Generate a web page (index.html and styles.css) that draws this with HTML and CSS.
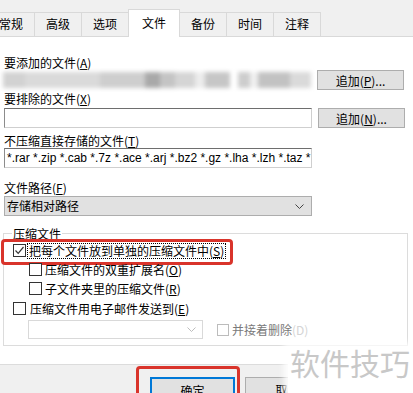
FILE: index.html
```html
<!DOCTYPE html>
<html lang="zh-CN">
<head>
  <meta charset="UTF-8" />
  <title>压缩文件名和参数 - 文件</title>
  <link rel="stylesheet" href="styles.css">
</head>
<body>

  <div class="dialog">
    <div class="tabs">
      <span class="tab tab-first">常规</span>
      <span class="tab">高级</span>
      <span class="tab">选项</span>
      <span class="tab active">文件</span>
      <span class="tab">备份</span>
      <span class="tab">时间</span>
      <span class="tab">注释</span>
    </div>

    <div class="page">
      <div class="label label-add">要添加的文件(<u>A</u>)</div>
      <div class="row">
        <div class="blur-field">
          <span class="seg" style="width:22px;background:#d2d2d2"></span>
          <span class="seg" style="width:75px;background:#dadada"></span>
          <span class="seg" style="width:45px;background:#cecece"></span>
          <span class="seg" style="width:15px;background:#a9a9a9"></span>
          <span class="seg" style="width:15px;background:#c4c4c4"></span>
          <span class="seg" style="width:20px;background:#d5d5d5"></span>
          <span class="seg" style="width:10px;background:#ececec"></span>
          <span class="seg" style="width:25px;background:#c6c6c6"></span>
          <span class="seg" style="width:8px;background:#ffffff"></span>
          <span class="seg" style="width:12px;background:#cdcdcd"></span>
          <span class="seg" style="width:8px;background:#f0f0f0"></span>
          <span class="seg" style="width:32px;background:#c2c2c2"></span>
          <span class="seg" style="width:21px;background:#dadada"></span>
        </div>
        <button class="btn">追加(<u>P</u>)...</button>
      </div>

      <div class="label label-exclude">要排除的文件(<u>X</u>)</div>
      <div class="row row-exclude">
        <div class="field"></div>
        <button class="btn">追加(<u>N</u>)...</button>
      </div>

      <div class="label label-store">不压缩直接存储的文件(<u>T</u>)</div>
      <div class="row">
        <div class="field field-text">*.rar *.zip *.cab *.7z *.ace *.arj *.bz2 *.gz *.lha *.lzh *.taz *</div>
      </div>

      <div class="label label-path">文件路径(<u>F</u>)</div>
      <div class="select">
        <span>存储相对路径</span>
        <svg class="chevron" width="9" height="5" viewBox="0 0 9 5"><path d="M0.5 0.5 L4.5 4.5 L8.5 0.5" fill="none" stroke="#444" stroke-width="1"/></svg>
      </div>

      <fieldset class="group">
        <legend>压缩文件</legend>

        <div class="check-row row-main">
          <span class="box checked">
            <svg width="11" height="11" viewBox="0 0 11 11"><path d="M1.5 5.5 L4.2 8.3 L9.5 2" fill="none" stroke="#333" stroke-width="1.2"/></svg>
          </span>
          <span class="focus-text">把每个文件放到单独的压缩文件中(<u>S</u>)</span>
          <span class="mark"></span>
        </div>

        <div class="check-row sub">
          <span class="box"></span>
          <span>压缩文件的双重扩展名(<u>O</u>)</span>
        </div>

        <div class="check-row sub">
          <span class="box"></span>
          <span>子文件夹里的压缩文件(<u>R</u>)</span>
        </div>

        <div class="check-row row-mail">
          <span class="box"></span>
          <span>压缩文件用电子邮件发送到(<u>E</u>)</span>
        </div>

        <div class="mail-row">
          <div class="combo">
            <svg class="chevron" width="9" height="5" viewBox="0 0 9 5"><path d="M0.5 0.5 L4.5 4.5 L8.5 0.5" fill="none" stroke="#bdbdbd" stroke-width="1"/></svg>
          </div>
          <div class="check-row disabled">
            <span class="box"></span>
            <span>并接着删除<span class="faded">(D)</span></span>
          </div>
        </div>
      </fieldset>
    </div>

    <div class="footer">
      <button class="btn btn-ok">确定</button>
      <button class="btn btn-cancel">取消</button>
      <span class="mark mark-ok"></span>
    </div>

    <div class="watermark">软件技巧</div>
  </div>

</body>
</html>
```

FILE: styles.css
```css
body {
  margin: 0;
  font-family: "Noto Sans CJK SC", "Liberation Sans", sans-serif;
  font-size: 12px;
  color: #000;
  background: #fff;
}

u {
  text-decoration: underline;
  text-underline-offset: 1px;
}

.dialog {
  width: 413px;
  height: 393px;
  background: #f0f0f0;
  display: flex;
  flex-direction: column;
  position: relative;
  overflow: hidden;
}

/* tab strip */

.tabs {
  display: flex;
  align-items: flex-end;
  height: 37px;
  box-sizing: border-box;
  border-bottom: 1px solid #d9d9d9;
  flex-shrink: 0;
}

.tab {
  height: 23px;
  line-height: 22px;
  padding: 0 11px;
  border-top: 1px solid #d9d9d9;
  border-right: 1px solid #d9d9d9;
  background: #f0f0f0;
  color: #000;
}

.tab-first {
  margin-left: -12px;
}

.tab.active {
  height: 27px;
  line-height: 25px;
  padding: 0 13px;
  margin-left: -1px;
  margin-bottom: -1px;
  border-left: 1px solid #d9d9d9;
  background: #fff;
  position: relative;
}

/* page */

.page {
  flex: 1;
  background: #fff;
  padding-left: 4px;
}

.label {
  line-height: 15px;
  height: 15px;
}

.label-add { margin-top: 18px; }
.label-exclude { margin-top: 1px; }
.label-store { margin-top: 5px; }
.label-path { margin-top: 12px; }

.row {
  display: flex;
  align-items: center;
  gap: 6px;
  height: 20px;
}

.row-exclude {
  margin-top: 2px;
}

.blur-field {
  width: 308px;
  height: 16px;
  display: flex;
  filter: blur(2px);
  margin-left: -1px;
  border-radius: 8px 0 0 8px;
}

.seg {
  display: block;
  height: 16px;
}

.field {
  width: 308px;
  height: 20px;
  box-sizing: border-box;
  border: 1px solid #cfcfcf;
  border-top-color: #6e6e6e;
  border-left-color: #8c8c8c;
  background: #fff;
}

.field-text {
  font-family: "Liberation Sans", sans-serif;
  font-size: 12px;
  line-height: 18px;
  padding-left: 2px;
  white-space: nowrap;
  overflow: hidden;
}

.btn {
  width: 87px;
  height: 20px;
  padding: 0;
  border: 1px solid #adadad;
  background: #e1e1e1;
  font-family: "Noto Sans CJK SC", "Liberation Sans", sans-serif;
  font-size: 12px;
  line-height: 17px;
  color: #000;
}

.select {
  width: 308px;
  height: 20px;
  box-sizing: border-box;
  margin-top: 1px;
  border: 1px solid #adadad;
  background: #e1e1e1;
  display: flex;
  align-items: center;
  justify-content: space-between;
  padding: 0 7px 0 2px;
  line-height: 18px;
}

/* group box */

.group {
  margin: 10px 5px 0 -1px;
  padding: 0 0 6px 8px;
  border: 1px solid #dcdcdc;
  min-width: 0;
}

.group legend {
  padding: 0 1px;
  line-height: 15px;
}

.check-row {
  display: flex;
  align-items: center;
  gap: 3px;
  height: 19px;
  position: relative;
}

.box {
  width: 13px;
  height: 13px;
  box-sizing: border-box;
  border: 1px solid #333;
  background: #fff;
  display: flex;
  align-items: center;
  justify-content: center;
  flex-shrink: 0;
  margin-left: 1px;
}

.focus-text {
  outline: 1px dotted #000;
  outline-offset: 0;
  line-height: 14px;
  padding: 0 1px;
  margin-left: -1px;
}

.row-main .mark {
  position: absolute;
  left: -11px;
  top: -2px;
  width: 232px;
  height: 26px;
  box-sizing: border-box;
  border: 3px solid #d9342b;
  border-radius: 4px;
}

.sub {
  padding-left: 16px;
}

.sub:first-of-type {
  margin-top: 3px;
}

.check-row.sub + .check-row.sub {
  margin-top: 0;
}

.row-mail {
  margin-top: 1px;
  gap: 4px;
}

.mail-row {
  display: flex;
  align-items: center;
  gap: 13px;
  margin-top: 2px;
  padding-left: 16px;
}

.combo {
  width: 175px;
  height: 19px;
  box-sizing: border-box;
  border: 1px solid #d9d9d9;
  background: #fff;
  display: flex;
  align-items: center;
  justify-content: flex-end;
  padding-right: 6px;
}

.disabled {
  color: #7a7a7a;
}

.disabled .box {
  border-color: #bcbcbc;
  width: 12px;
  height: 12px;
}

.faded {
  color: #d4d4d4;
}

/* footer */

.footer {
  height: 29px;
  flex-shrink: 0;
  box-sizing: border-box;
  border-top: 1px solid #dcdcdc;
  display: flex;
  align-items: flex-start;
  gap: 10px;
  padding: 12px 0 0 150px;
  position: relative;
}

.footer .btn {
  width: 85px;
  height: 24px;
  line-height: 24px;
}

.btn-ok {
  border: 2px solid #0078d7;
}

.mark-ok {
  position: absolute;
  left: 136px;
  top: 1px;
  width: 104px;
  height: 34px;
  box-sizing: border-box;
  border: 3px solid #d9342b;
  border-radius: 4px;
}

.watermark {
  position: absolute;
  right: 0;
  bottom: 0;
  width: 125px;
  height: 46px;
  box-sizing: border-box;
  padding-left: 2px;
  background: #fff;
  color: #c8c8c8;
  font-size: 30px;
  line-height: 30px;
  white-space: nowrap;
  box-shadow: -2px -2px 6px 2px rgba(255, 255, 255, 0.9);
}
```
